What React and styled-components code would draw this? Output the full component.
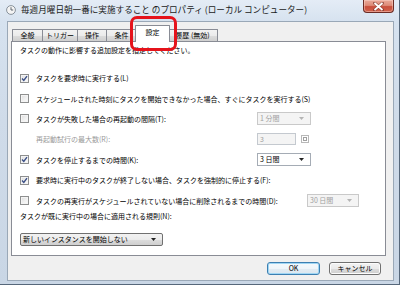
import React from "react";
import styled, { createGlobalStyle } from "styled-components";

const GlobalStyle = createGlobalStyle`
  html, body {
    margin: 0;
    padding: 0;
    width: 400px;
    height: 285px;
    overflow: hidden;
    background: #ffffff;
  }
  body {
    font-family: "Noto Sans CJK JP", "Noto Sans", sans-serif;
    color: #000;
  }
`;

const tabs = [
  { label: "全般", width: 31 },
  { label: "トリガー", width: 36 },
  { label: "操作", width: 30 },
  { label: "条件", width: 31 },
  { label: "設定", width: 33, active: true },
  { label: "履歴 (無効)", width: 51 },
];

const ClockIcon = () => (
  <svg width="10" height="10" viewBox="0 0 10 10">
    <circle cx="5" cy="5" r="4.4" fill="#f4f4f4" stroke="#7d8791" strokeWidth="0.9" />
    <path d="M5 2.2 V5 H7.2" fill="none" stroke="#505a64" strokeWidth="0.9" />
  </svg>
);

const CloseGlyph = () => (
  <svg width="11" height="9" viewBox="0 0 11 9">
    <path
      d="M1.5 1 L9.5 8 M9.5 1 L1.5 8"
      stroke="#6a2a22"
      strokeWidth="3.2"
      strokeLinecap="square"
      opacity="0.55"
    />
    <path d="M1.5 1 L9.5 8 M9.5 1 L1.5 8" stroke="#ffffff" strokeWidth="1.8" />
  </svg>
);

const CheckMark = () => (
  <svg width="7" height="7" viewBox="0 0 7 7">
    <path d="M1 3.6 L2.8 5.4 L6 1.2" fill="none" stroke="#3b4f86" strokeWidth="1.4" />
  </svg>
);

const Arrow = ({ muted }) => (
  <svg width="5" height="3" viewBox="0 0 5 3">
    <path d="M0 0 H5 L2.5 3 Z" fill={muted ? "#b4b4b4" : "#222"} />
  </svg>
);

const Check = ({ checked }) => (
  <Box>{checked && <CheckMark />}</Box>
);

const Select = ({ value, width, disabled }) => (
  <Combo $width={width} $disabled={disabled}>
    <span>{value}</span>
    <Arrow muted={disabled} />
  </Combo>
);

const App = () => {
  return (
    <>
      <GlobalStyle />
      <Window>
        <TitleBar>
          <IconSlot>
            <ClockIcon />
          </IconSlot>
          <Title>毎週月曜日朝一番に実施すること のプロパティ (ローカル コンピューター)</Title>
          <CloseButton>
            <CloseGlyph />
          </CloseButton>
        </TitleBar>
        <Body>
          <TabRow>
            {tabs.map((t) => (
              <Tab key={t.label} $width={t.width} $active={t.active}>
                {t.label}
              </Tab>
            ))}
          </TabRow>
          <Panel>
            <Intro>タスクの動作に影響する追加設定を指定してください。</Intro>
            <Rows>
              <Row>
                <Check checked />
                <Label>タスクを要求時に実行する(L)</Label>
              </Row>
              <Row>
                <Check />
                <Label>スケジュールされた時刻にタスクを開始できなかった場合、すぐにタスクを実行する(S)</Label>
              </Row>
              <Row>
                <Check />
                <Label $width={221}>タスクが失敗した場合の再起動の間隔(T):</Label>
                <Select value="1 分間" width={54} disabled />
              </Row>
              <Row $indent>
                <Label $width={221} $disabled>
                  再起動試行の最大数(R):
                </Label>
                <NumberField>3</NumberField>
                <Spinner>
                  <SpinnerDot />
                </Spinner>
              </Row>
              <Row>
                <Check checked />
                <Label $width={221}>タスクを停止するまでの時間(K):</Label>
                <Select value="3 日間" width={54} />
              </Row>
              <Row>
                <Check checked />
                <Label>要求時に実行中のタスクが終了しない場合、タスクを強制的に停止する(F):</Label>
              </Row>
              <Row>
                <Check />
                <Label $width={271}>
                  タスクの再実行がスケジュールされていない場合に削除されるまでの時間(D):
                </Label>
                <Select value="30 日間" width={52} disabled />
              </Row>
            </Rows>
            <RuleLabel>タスクが既に実行中の場合に適用される規則(N):</RuleLabel>
            <RuleSelect>
              <span>新しいインスタンスを開始しない</span>
              <Arrow />
            </RuleSelect>
          </Panel>
          <Footer>
            <Button $primary>OK</Button>
            <Button>キャンセル</Button>
          </Footer>
        </Body>
        <Marker />
      </Window>
    </>
  );
};

export default App;

const Window = styled.div`
  position: relative;
  width: 400px;
  height: 285px;
  box-sizing: border-box;
  display: flex;
  flex-direction: column;
  background: linear-gradient(to bottom, #e4ecf6 0px, #d6e2ef 22px, #cfdbe9 120px, #c9d6e5 100%);
  border-right: 1px solid #56677a;
  border-bottom: 1px solid #56677a;
`;

const TitleBar = styled.div`
  height: 21px;
  display: flex;
  align-items: flex-start;
  flex-shrink: 0;
`;

const IconSlot = styled.div`
  margin: 5px 0 0 6px;
  width: 10px;
  height: 10px;
  display: flex;
`;

const Title = styled.div`
  margin: 3px 0 0 5px;
  font-size: 8.6px;
  line-height: 12px;
  color: #1a1a1a;
  white-space: nowrap;
`;

const CloseButton = styled.div`
  margin-left: auto;
  margin-right: 5px;
  width: 31px;
  height: 13px;
  box-sizing: border-box;
  border: 1px solid #6b2c25;
  border-top: none;
  border-radius: 0 0 4px 4px;
  background: linear-gradient(to bottom, #e9a999 0%, #de8b78 45%, #c94f3c 55%, #d0624c 100%);
  box-shadow: inset 0 0 0 1px rgba(255, 220, 210, 0.45);
  display: flex;
  align-items: center;
  justify-content: center;
`;

const Body = styled.div`
  flex: 1;
  margin: 0 5px 3px 7px;
  box-sizing: border-box;
  border: 1px solid #9aa8b7;
  background: #f0f0f0;
  padding: 3px 7px 0 3px;
  display: flex;
  flex-direction: column;
`;

const TabRow = styled.div`
  height: 16px;
  display: flex;
  align-items: flex-end;
  padding-left: 1px;
  position: relative;
  z-index: 1;
`;

const Tab = styled.div`
  width: ${(p) => p.$width + (p.$active ? 2 : 0)}px;
  height: ${(p) => (p.$active ? 17 : 12)}px;
  box-sizing: border-box;
  margin-left: ${(p) => (p.$active ? -2 : -1)}px;
  margin-right: ${(p) => (p.$active ? -2 : 0)}px;
  margin-bottom: ${(p) => (p.$active ? -1 : 0)}px;
  border: 1px solid #898c95;
  border-bottom: none;
  border-radius: 1px 1px 0 0;
  background: ${(p) =>
    p.$active
      ? "#ffffff"
      : "linear-gradient(to bottom, #f2f2f2 0%, #ebebeb 50%, #dddddd 51%, #cfcfcf 100%)"};
  position: relative;
  z-index: ${(p) => (p.$active ? 2 : 1)};
  font-size: 7px;
  line-height: ${(p) => (p.$active ? 12 : 11)}px;
  padding-top: ${(p) => (p.$active ? 0 : 0)}px;
  text-align: center;
  white-space: nowrap;

  &:first-child {
    margin-left: 0;
  }
`;

const Panel = styled.div`
  height: 215px;
  box-sizing: border-box;
  border: 1px solid #898c95;
  background: #ffffff;
  padding-left: 8px;
  display: flex;
  flex-direction: column;
`;

const Intro = styled.div`
  height: 16px;
  font-size: 7px;
  line-height: 16px;
  white-space: nowrap;
`;

const Rows = styled.div`
  margin-top: 10px;
  display: flex;
  flex-direction: column;
`;

const Row = styled.div`
  height: 20.4px;
  display: flex;
  align-items: center;
  padding-left: ${(p) => (p.$indent ? 16 : 0)}px;
`;

const Box = styled.div`
  width: 9px;
  height: 9px;
  box-sizing: border-box;
  border: 1px solid #8e8f8f;
  background: linear-gradient(135deg, #dcdcdc 0%, #f0f0f0 55%, #fcfcfc 100%);
  box-shadow: inset 0 0 0 1px #f4f4f4;
  margin-right: 7px;
  display: flex;
  align-items: center;
  justify-content: center;
  flex-shrink: 0;
`;

const Label = styled.div`
  font-size: 7px;
  line-height: 10px;
  white-space: nowrap;
  color: ${(p) => (p.$disabled ? "#9a9a9a" : "#000")};
  width: ${(p) => (p.$width ? `${p.$width}px` : "auto")};
  flex-shrink: 0;
`;

const Combo = styled.div`
  width: ${(p) => p.$width}px;
  height: 13px;
  box-sizing: border-box;
  border: 1px solid ${(p) => (p.$disabled ? "#c9c9c9" : "#a5acb5")};
  background: ${(p) => (p.$disabled ? "#f4f4f4" : "#ffffff")};
  color: ${(p) => (p.$disabled ? "#a0a0a0" : "#000")};
  font-size: 7px;
  line-height: 11px;
  padding: 0 6px 0 2px;
  display: flex;
  align-items: center;
  justify-content: space-between;
  white-space: nowrap;
`;

const NumberField = styled.div`
  width: 39px;
  height: 12px;
  box-sizing: border-box;
  border: 1px solid #c4c9cf;
  background: #f4f4f4;
  color: #a0a0a0;
  font-size: 7px;
  line-height: 10px;
  padding-left: 2px;
`;

const Spinner = styled.div`
  margin-left: 5px;
  width: 8px;
  height: 8px;
  box-sizing: border-box;
  border: 1px solid #b8b8b8;
  display: flex;
  align-items: center;
  justify-content: center;
`;

const SpinnerDot = styled.div`
  width: 4px;
  height: 4px;
  box-sizing: border-box;
  border: 1px solid #a0a0a0;
`;

const RuleLabel = styled.div`
  height: 11px;
  margin-top: 0.2px;
  font-size: 7px;
  line-height: 11px;
  white-space: nowrap;
`;

const RuleSelect = styled.div`
  margin-top: 11px;
  width: 143px;
  height: 13px;
  box-sizing: border-box;
  border: 1px solid #707070;
  border-radius: 2px;
  background: linear-gradient(to bottom, #f2f2f2 0%, #ebebeb 50%, #dddddd 51%, #cfcfcf 100%);
  font-size: 7px;
  line-height: 11px;
  padding: 0 6px 0 2px;
  display: flex;
  align-items: center;
  justify-content: space-between;
  white-space: nowrap;
`;

const Footer = styled.div`
  flex: 1;
  display: flex;
  align-items: center;
  justify-content: flex-end;
  gap: 9px;
  padding-right: 5px;
`;

const Button = styled.div`
  width: ${(p) => (p.$primary ? 53 : 52)}px;
  height: 13px;
  box-sizing: border-box;
  border: 1px solid ${(p) => (p.$primary ? "#3c7fb1" : "#707070")};
  border-radius: 3px;
  background: ${(p) =>
    p.$primary
      ? "linear-gradient(to bottom, #f4f9fc 0%, #eef5fa 50%, #e2ecf3 51%, #dae7f0 100%)"
      : "linear-gradient(to bottom, #f2f2f2 0%, #ebebeb 50%, #dddddd 51%, #cfcfcf 100%)"};
  box-shadow: ${(p) => (p.$primary ? "inset 0 0 0 1px #9fd6f4" : "inset 0 0 0 1px #fcfcfc")};
  font-size: 7px;
  line-height: 11px;
  text-align: center;
  white-space: nowrap;
`;

const Marker = styled.div`
  position: absolute;
  left: 130px;
  top: 16px;
  width: 47px;
  height: 35px;
  box-sizing: border-box;
  border: 3px solid #e5131b;
  border-radius: 7px;
  z-index: 5;
  pointer-events: none;
`;
